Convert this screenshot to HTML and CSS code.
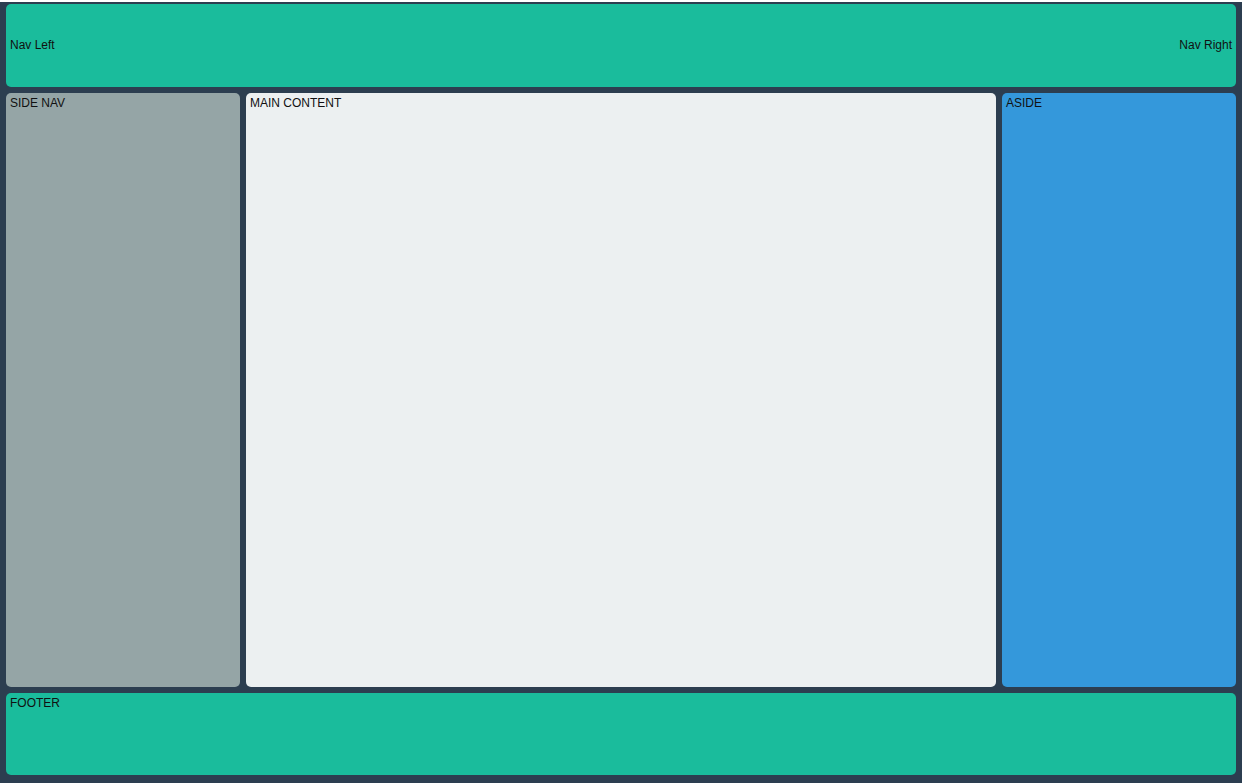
FILE: index.html
```html
<!DOCTYPE html>
<html>
<head>
<meta charset="utf-8">
<link rel="stylesheet" href="styles.css">
</head>
<body>
<div class="page">
  <header class="top">
    <span>Nav Left</span>
    <span>Nav Right</span>
  </header>
  <div class="middle">
    <nav class="side">SIDE NAV</nav>
    <main class="main">MAIN CONTENT</main>
    <aside class="aside">ASIDE</aside>
  </div>
  <footer class="foot">FOOTER</footer>
</div>
</body>
</html>
```
FILE: styles.css
```css
html, body {
  margin: 0;
  padding: 0;
  height: 100%;
  background: #ffffff;
}
body {
  padding-top: 2px;
  box-sizing: border-box;
  font-family: "Liberation Sans", Arial, sans-serif;
  font-size: 12px;
  color: #111;
}
.page {
  height: 100%;
  box-sizing: border-box;
  background: #2c3e50;
  padding: 2px 6px 8px 6px;
  display: flex;
  flex-direction: column;
  gap: 6px;
}
.top {
  height: 83px;
  flex: none;
  background: #1abc9c;
  border-radius: 5px;
  display: flex;
  justify-content: space-between;
  align-items: center;
  padding: 0 4px 2px 4px;
  box-sizing: border-box;
}
.middle {
  flex: 1;
  display: grid;
  grid-template-columns: 234px 1fr 234px;
  gap: 6px;
}
.side, .main, .aside {
  border-radius: 5px;
  padding: 3px 4px;
}
.side { background: #95a5a6; }
.main { background: #ecf0f1; }
.aside { background: #3498db; }
.foot {
  height: 82px;
  flex: none;
  box-sizing: border-box;
  background: #1abc9c;
  border-radius: 5px;
  padding: 3px 4px;
}
```
